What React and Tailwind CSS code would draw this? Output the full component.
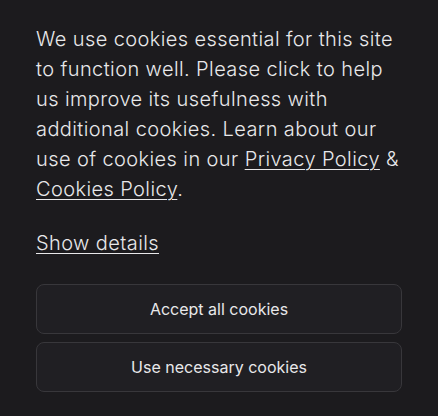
export default function App() {
  return (
    <div className="min-h-screen bg-[#1c1b1e] text-[#e8e8ea]" style={{ fontFamily: "Inter, 'Noto Sans', sans-serif" }}>
      <div className="px-9 pt-6">
        <p className="text-[20px] font-light leading-[30px] tracking-[0.02em]">
          We use cookies essential for this site to function well. Please click to help us improve its usefulness with additional cookies. Learn about our use of cookies in our{" "}
          <a href="#" className="underline underline-offset-[3px] decoration-1">Privacy Policy</a> &amp;{" "}
          <a href="#" className="underline underline-offset-[3px] decoration-1">Cookies Policy</a>.
        </p>
        <div className="mt-6 text-[20px] font-light leading-[30px] tracking-[0.02em]">
          <a href="#" className="underline underline-offset-[3px] decoration-1">Show details</a>
        </div>
        <div className="mt-[26px] flex flex-col gap-2">
          <button className="h-[50px] w-full rounded-lg border border-[#38373b] bg-[#201f23] text-[16px] text-[#e8e8ea]">
            Accept all cookies
          </button>
          <button className="h-[50px] w-full rounded-lg border border-[#38373b] bg-[#201f23] text-[16px] text-[#e8e8ea]">
            Use necessary cookies
          </button>
        </div>
      </div>
    </div>
  );
}
